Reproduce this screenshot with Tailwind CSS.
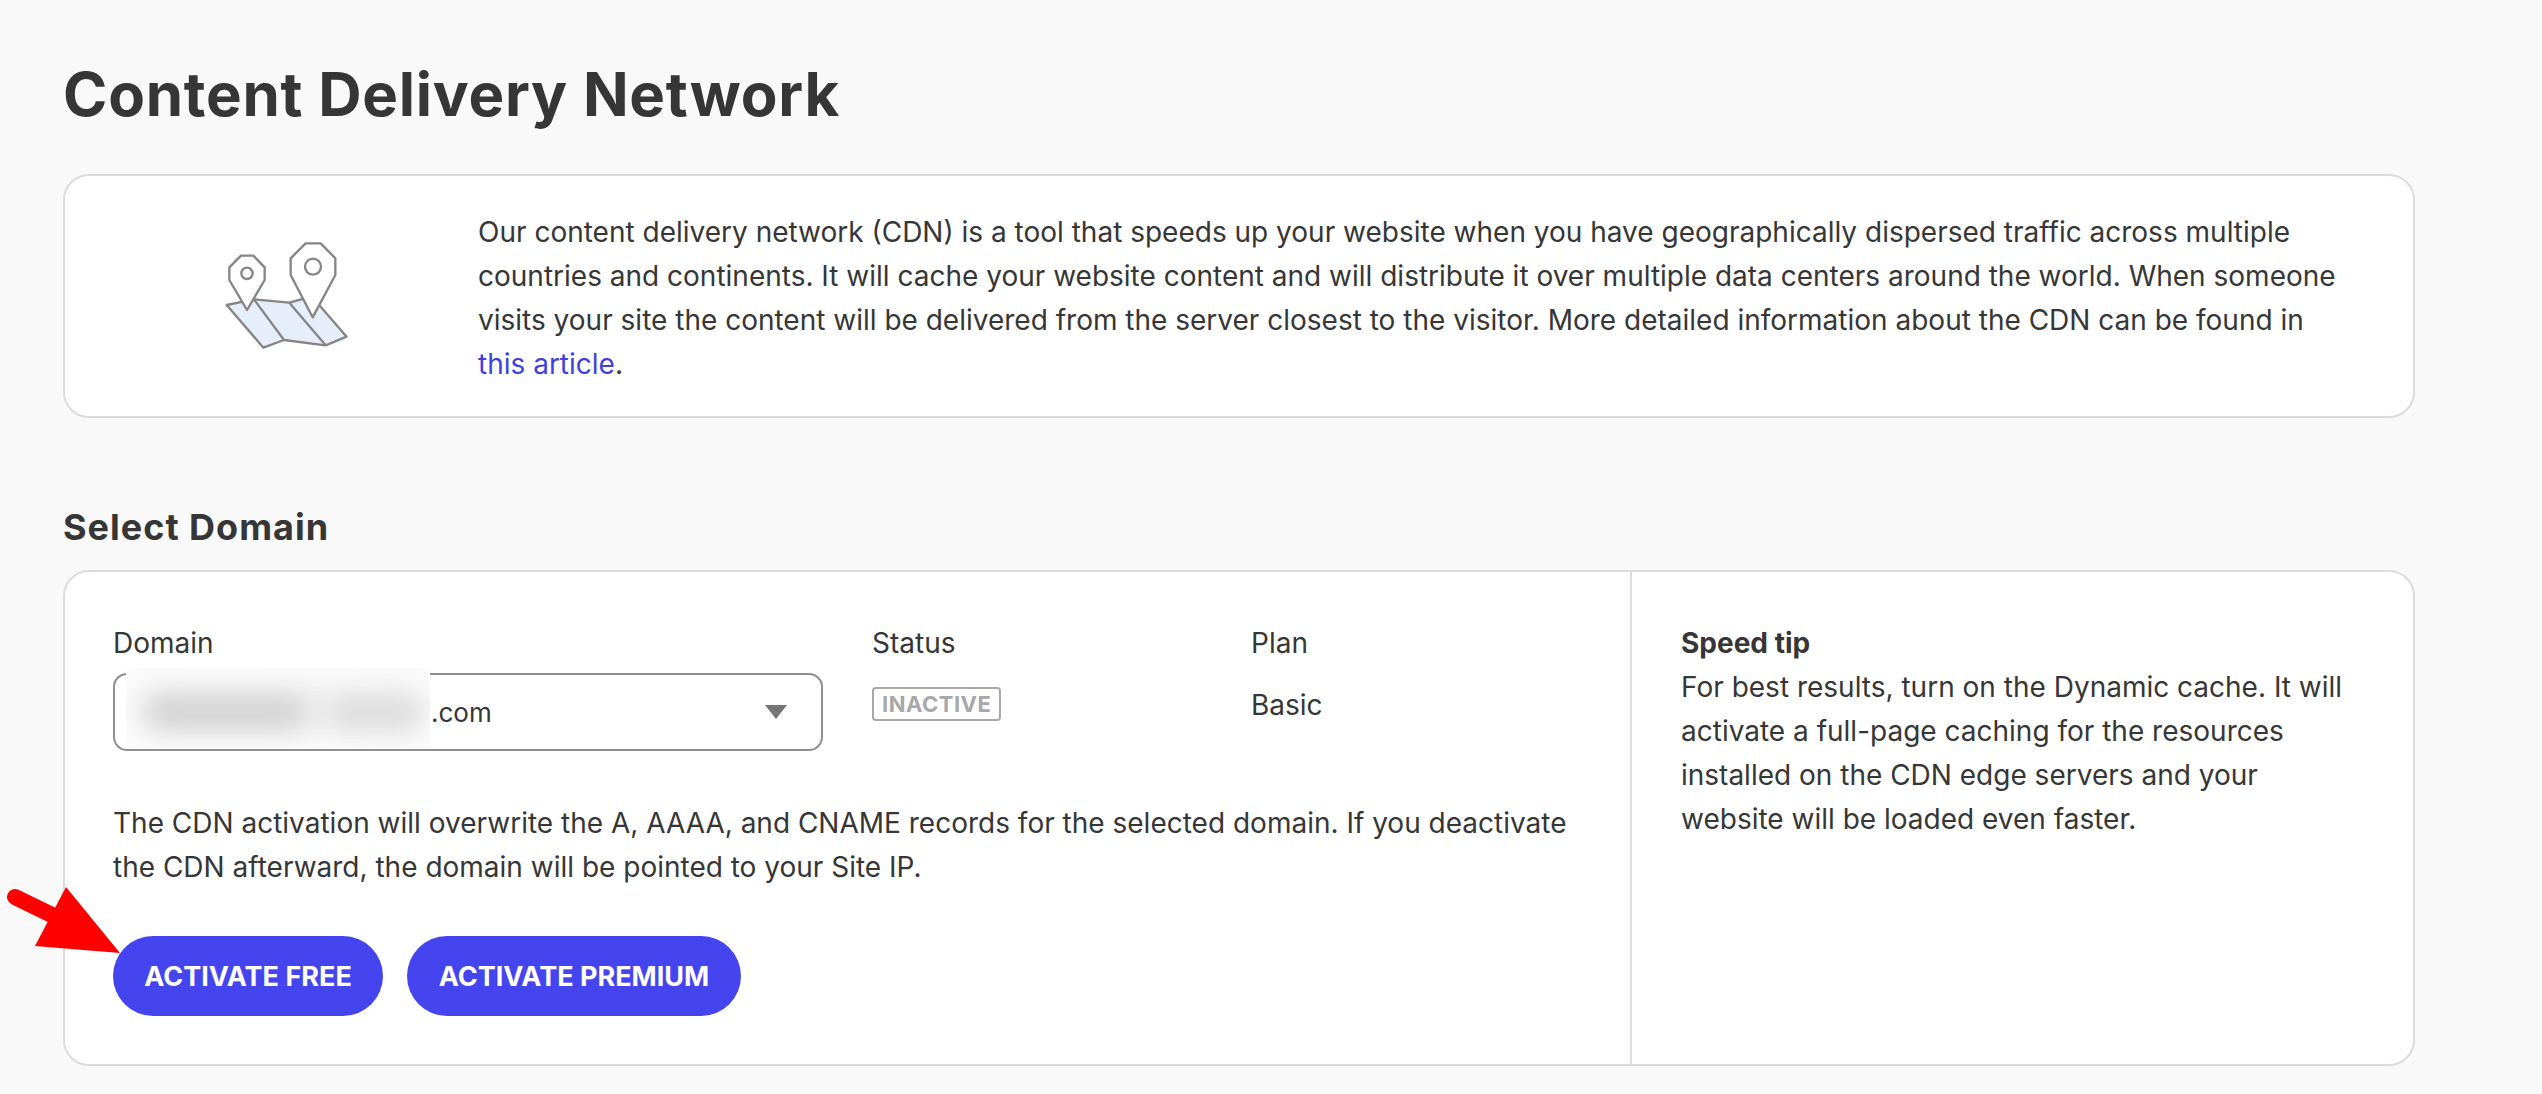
<!DOCTYPE html>
<html lang="en">
<head>
    <meta charset="UTF-8">
    <title>Content Delivery Network</title>
    <script src="https://cdn.jsdelivr.net/npm/@tailwindcss/browser@4"></script>
</head>
<body class="bg-[#f9f9f9] font-['Inter',sans-serif] text-[#363636] text-[28px] leading-[44px] overflow-hidden">
    <div class="relative h-[1094px] w-[2542px] overflow-hidden">
    <main class="ml-[63px] w-[2352px] pt-[56px]">
        <h1 class="font-bold text-[60px] leading-[76px] tracking-[0.75px] h-[118px]">Content Delivery Network</h1>

        <!-- intro card -->
        <section class="flex h-[244px] bg-white border-2 border-[#dcdcdc] rounded-[26px]">
            <div class="w-[413px] shrink-0 pl-[115px] pt-[24px]">
                <svg width="220" height="180" viewBox="0 0 660 540" fill="none" stroke="#858585" stroke-width="7" stroke-linejoin="round">
                    <path fill="#e6eefa" d="M140 315L222 298L328 308L375 295L420 318L500 410L437 436L312 420L250 443Z"/>
                    <path d="M222 298L312 420M328 308L437 436"/>
                    <path fill="#fff" d="M183 167H220L254 202V240L201 330L148 240V202Z"/>
                    <circle cx="201" cy="220" r="17" fill="#fff"/>
                    <path fill="#fff" d="M377 130H422L466 175V225L398 352L332 225V175Z"/>
                    <circle cx="399" cy="200" r="24" fill="#fff"/>
                </svg>
            </div>
            <p class="pt-[34px] w-[1864px]">Our content delivery network (CDN) is a tool that speeds up your website when you have geographically dispersed traffic across multiple countries and continents. It will cache your website content and will distribute it over multiple data centers around the world. When someone visits your site the content will be delivered from the server closest to the visitor. More detailed information about the CDN can be found in <a class="text-[#3f3fe0]">this article</a>.</p>
        </section>

        <h2 class="font-bold text-[36px] leading-[44px] tracking-[1px] mt-[87px] mb-[21px]">Select Domain</h2>

        <!-- domain card -->
        <section class="flex h-[496px] bg-white border-2 border-[#dcdcdc] rounded-[26px]">
            <div class="w-[1567px] shrink-0 border-r-2 border-[#dcdcdc] pl-[48px] pt-[49px]">
                <div class="flex">
                    <div class="w-[710px] mr-[49px]">
                        <div>Domain</div>
                        <div class="relative flex items-center justify-between h-[78px] mt-[8px] border-2 border-[#8f8f8f] rounded-[14px] pl-[316px] pr-[34px]">
                            <span class="pt-[2px] text-[26px]">.com</span>
                            <svg width="22" height="14" viewBox="0 0 22 14"><path fill="#757575" d="M0 0H22L11 14Z"/></svg>
                            <!-- blurred-out domain name -->
                            <div class="absolute left-[11px] -top-[7px] w-[304px] h-[80px] bg-[#fbfbfb] overflow-hidden">
                                <div class="absolute left-[10px] top-[18px] w-[290px] h-[48px] bg-[#efefef] rounded-full blur-[12px]"></div>
                                <div class="absolute left-[20px] top-[28px] w-[160px] h-[32px] bg-[#d2d2d2] rounded-full blur-[12px]"></div>
                                <div class="absolute left-[204px] top-[30px] w-[90px] h-[30px] bg-[#dcdcdc] rounded-full blur-[12px]"></div>
                            </div>
                        </div>
                    </div>
                    <div class="w-[379px]">
                        <div>Status</div>
                        <div class="inline-block mt-[22px] border-2 border-[#a8a8a8] rounded-[4px] px-[8px] font-bold text-[22px] leading-[30px] tracking-[0.5px] text-[#a8a8a8]">INACTIVE</div>
                    </div>
                    <div>
                        <div>Plan</div>
                        <div class="mt-[26px] leading-[28px]">Basic</div>
                    </div>
                </div>
                <p class="mt-[50px] w-[1480px]">The CDN activation will overwrite the A, AAAA, and CNAME records for the selected domain. If you deactivate the CDN afterward, the domain will be pointed to your Site IP.</p>
                <div class="flex gap-[24px] mt-[47px]">
                    <button class="w-[270px] h-[80px] rounded-full bg-[#4545f0] text-white font-bold text-[27px] pt-[2px]">ACTIVATE FREE</button>
                    <button class="w-[334px] h-[80px] rounded-full bg-[#4545f0] text-white font-bold text-[27px] pt-[2px]">ACTIVATE PREMIUM</button>
                </div>
            </div>
            <div class="pl-[49px] pt-[49px] w-[715px]">
                <div class="font-bold">Speed tip</div>
                <p>For best results, turn on the Dynamic cache. It will activate a full-page caching for the resources installed on the CDN edge servers and your website will be loaded even faster.</p>
            </div>
        </section>
    </main>

    <!-- red annotation arrow -->
    <svg class="absolute left-0 top-[860px]" width="140" height="110" viewBox="0 0 140 110">
        <path d="M15 37L58 58" stroke="#ff0000" stroke-width="16" stroke-linecap="round"/>
        <path fill="#ff0000" d="M66 27L35 86L120 93Z"/>
    </svg>
    </div>
</body>
</html>
